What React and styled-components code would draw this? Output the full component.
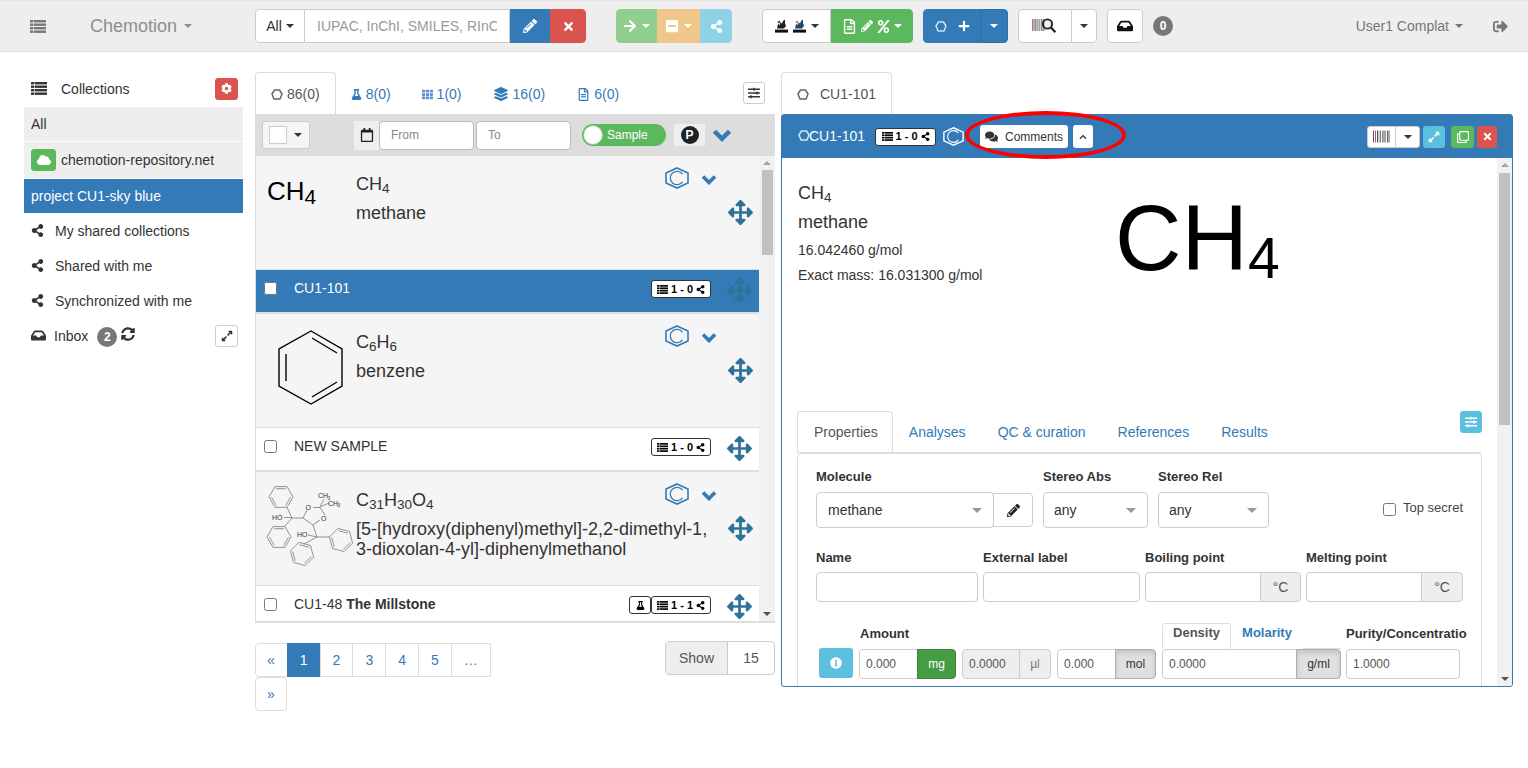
import React from "react";
import styled, { createGlobalStyle } from "styled-components";
import {
  FaPencilAlt, FaTimes, FaArrowRight, FaMinusSquare, FaShareAlt, FaPlus, FaInbox,
  FaSignOutAlt, FaCog, FaCloud, FaSyncAlt, FaExpandAlt, FaFlask, FaTh, FaLayerGroup, FaRegFileAlt,
  FaSlidersH, FaRegCalendar, FaChevronUp, FaArrowsAlt, FaComments, FaRegClone,
  FaInfoCircle, FaPercent,
} from "react-icons/fa";

const Global = createGlobalStyle`
  html, body { margin: 0; padding: 0; background: #fff; overflow: hidden; }
  body { font-family: "Liberation Sans", Arial, sans-serif; font-size: 14px; color: #333; line-height: 20px; }
  * { box-sizing: border-box; }
  sub { font-size: 75%; line-height: 0; vertical-align: baseline; position: relative; bottom: -0.25em; }
`;

const Page = styled.div`width: 1528px; height: 768px; overflow: hidden;`;

/* navbar */
const Nav = styled.nav`
  height: 52px; background: #eee; border-top: 1px solid #e7e7e7; border-bottom: 1px solid #e2e2e2;
  display: flex; align-items: center;
`;
const NavLeft = styled.div`width: 255px; display: flex; align-items: center; color: #777; padding-left: 30px;`;
const Brand = styled.span`margin-left: 44px; font-size: 18px; color: #8f8f8f; display: flex; align-items: center; gap: 7px;`;
const Caret = styled.span`
  display: inline-block; width: 0; height: 0; flex: none;
  border-top: 4px solid ${p => p.$color || "#333"}; border-left: 4px solid transparent; border-right: 4px solid transparent;
`;
const ToolGroup = styled.div`
  display: flex; height: 34px; margin-left: ${p => p.$ml || 0}px; border-radius: 4px; overflow: hidden; flex: none;
`;
const ToolBtn = styled.div`
  width: ${p => p.$w}px; height: 34px; display: flex; align-items: center; justify-content: center; gap: ${p => p.$gap ?? 5}px;
  background: ${p => p.$bg || "#fff"}; color: ${p => p.$color || "#333"};
  border: 1px solid ${p => p.$border || p.$bg || "#ccc"}; margin-left: ${p => p.$join ? "-1px" : "0"};
  &:first-child { border-radius: 4px 0 0 4px; }
  &:last-child { border-radius: 0 4px 4px 0; }
  &:only-child { border-radius: 4px; }
`;
const SearchInput = styled.input`
  width: 205px; height: 34px; border: 1px solid #ccc; border-left: 0; padding: 0 12px; font: 14px "Liberation Sans", sans-serif; color: #555;
  outline: 0; &::placeholder { color: #999; opacity: 1; }
`;
const CountBadge = styled.span`
  display: inline-flex; align-items: center; justify-content: center; width: 20px; height: 20px; border-radius: 50%;
  background: #777; color: #fff; font-size: 12px; font-weight: 700; line-height: 1; margin-left: ${p => p.$ml || 0}px; margin-top: ${p => p.$mt || 0}px; flex: none;
`;
const UserMenu = styled.div`
  margin-left: auto; display: flex; align-items: center; gap: 6px; color: #777; white-space: nowrap;
`;
const LogOut = styled.div`margin: 0 20px 0 30px; color: #777; display: flex;`;

/* layout */
const Main = styled.main`display: flex; padding: 20px 0 0 24px;`;
const Side = styled.aside`width: 219px; flex: none;`;
const Middle = styled.section`width: 520px; margin-left: 12px; flex: none;`;
const Right = styled.section`width: 732px; margin-left: 6px; flex: none;`;

/* sidebar */
const SideHead = styled.div`height: 35px; display: flex; align-items: center; padding: 0 5px 2px 7px;`;
const SideHeadText = styled.span`margin-left: 14px;`;
const MiniBtn = styled.div`
  width: ${p => p.$w || 23}px; height: ${p => p.$h || 22}px; margin-left: ${p => p.$auto ? "auto" : "0"}; border-radius: 3px; flex: none;
  display: flex; align-items: center; justify-content: center;
  background: ${p => p.$bg || "#fff"}; color: ${p => p.$color || "#333"}; border: 1px solid ${p => p.$border || p.$bg || "#ccc"};
`;
const SideRow = styled.div`
  height: ${p => p.$h || 35}px; display: flex; align-items: center; padding: 0 5px 0 7px; margin-bottom: ${p => p.$mb || 0}px;
  background: ${p => p.$bg || "transparent"}; color: ${p => p.$color || "#333"};
`;
const RowLabel = styled.span`margin-left: ${p => p.$ml}px;`;
const Sync = styled.span`display: flex; margin: -4px 0 0 4px;`;

/* tabs */
const TabBar = styled.div`height: 42px; display: flex; align-items: flex-start;`;
const Tab = styled.div`
  height: 42px; padding: 1px 15px 0; display: flex; align-items: center; gap: ${p => p.$gap || 4}px; margin-left: ${p => p.$ml || 0}px;
  color: ${p => p.$active ? "#555" : "#337ab7"};
  border: 1px solid ${p => p.$active ? "#ddd" : "transparent"}; border-bottom: 0; border-radius: 4px 4px 0 0; background: ${p => p.$active ? "#fff" : "transparent"};
`;
const GridTabIcon = styled.span`display: flex; color: #5a94c8;`;
const BarEnd = styled.div`margin: 10px 10px 0 auto;`;

/* list toolbar */
const ListTools = styled.div`height: 42px; background: #ddd; display: flex; align-items: center; padding-left: 7px;`;
const CheckMenu = styled.div`
  width: 48px; height: 28px; border: 1px solid #ccc; border-radius: 3px; background: #f5f5f5; display: flex; align-items: center; gap: 7px; padding-left: 6px;
`;
const CheckFace = styled.span`width: 18px; height: 18px; background: #fff; border: 1px solid #ccc; flex: none;`;
const DateAddon = styled.div`
  width: 25px; height: 29px; margin-left: 44px; background: #eee; display: flex; align-items: center; justify-content: center; color: #222;
`;
const DateInput = styled.input`
  width: ${p => p.$w}px; height: 29px; margin-right: 2px; padding: 0 11px; border: 1px solid #bbb; border-radius: 4px; outline: 0; background: #fff; font: 12px "Liberation Sans", sans-serif;
  &::placeholder { color: #888; opacity: 1; }
`;
const Toggle = styled.div`
  width: 84px; height: 22px; margin-left: 9px; border-radius: 11px; background: #5cb85c; position: relative; display: flex; align-items: center; padding-left: 25px;
  color: #fff; font-size: 12px;
`;
const Knob = styled.span`position: absolute; left: 1px; top: 1px; width: 20px; height: 20px; border-radius: 50%; background: #fff; border: 1px solid #8ccc8c;`;
const PBox = styled.div`width: 31px; height: 22px; margin-left: 8px; background: #eee; display: flex; align-items: center; justify-content: center;`;
const PCircle = styled.span`
  width: 18px; height: 18px; border-radius: 50%; background: #222; color: #fff; font-size: 12px; font-weight: 700; display: flex; align-items: center; justify-content: center;
`;
const ToolChevron = styled.div`margin-left: 7px; color: #337ab7; display: flex;`;

/* list */
const ListWrap = styled.div`display: flex; height: 467px; border-bottom: 2px solid #ddd; border-left: 1px solid #ddd;`;
const ListItems = styled.div`flex: 1; overflow: hidden; min-width: 0;`;
const MolRow = styled.div`height: 114px; background: #f5f5f5; display: flex; border-bottom: 1px solid #ddd;`;
const MolImage = styled.div`width: 100px; flex: none; position: relative;`;
const MolTextCol = styled.div`width: 365px; flex: none;`;
const FormulaLine = styled.div`
  display: flex; align-items: flex-start; justify-content: space-between; height: 47px; padding: 11px 4px 0 0;
`;
const Formula = styled.div`font-size: 18px; line-height: 20px; margin-top: 7px; color: #333;`;
const MolIcons = styled.div`display: flex; align-items: flex-start; gap: 12px;`;
const Down = styled.span`display: flex; color: #337ab7; margin-top: 7px;`;
const MolName = styled.div`font-size: 18px; line-height: 20px; color: #333; margin-top: 0;`;
const MoveCell = styled.div`
  flex: 1; display: flex; justify-content: center; padding-top: ${p => p.$top || 0}px; color: #2f7299;
`;
const SampleRow = styled.div`
  height: 44px; flex: none; display: flex; align-items: flex-start; padding-left: 8px;
  background: ${p => p.$selected ? "#337ab7" : "#fff"}; color: ${p => p.$selected ? "#fff" : "#333"};
  border-bottom: 2px solid #ddd;
`;
const Check = styled.input.attrs({ type: "checkbox" })`margin: 0; width: 13px; height: 13px; flex: none;`;
const RowCheck = styled(Check)`margin-top: 12px;`;
const SampleName = styled.span`margin: 8px 0 0 17px;`;
const SampleTail = styled.div`margin-left: auto; display: flex; align-items: flex-start; padding-top: 10px;`;
const RightTail = styled.div`width: 48px; margin-top: -2px; padding-left: 9px; display: flex; justify-content: center; color: #2f7299;`;
const Tag = styled.span`
  display: inline-flex; align-items: center; justify-content: center; gap: 3px; height: 18px; width: ${p => p.$w || 60}px; flex: none; background: #fff; color: #000;
  border: 1px solid ${p => p.$border || "#333"}; border-radius: 3px; font-size: 11px; font-weight: 700; line-height: 1;
`;

/* scrollbar */
const Bar = styled.div`width: ${p => p.$w || 15}px; flex: none; background: #f1f1f1; display: flex; flex-direction: column; align-items: center;`;
const BarArrow = styled.span`
  width: 0; height: 0; margin-top: ${p => p.$down ? "auto" : "5px"}; margin-bottom: ${p => p.$down ? "5px" : 0};
  border-left: 4px solid transparent; border-right: 4px solid transparent;
  ${p => p.$down ? "border-top: 4px solid #505050;" : "border-bottom: 4px solid #a3a3a3;"}
`;
const BarThumb = styled.span`width: 11px; height: ${p => p.$h}px; margin-top: ${p => p.$top}px; background: #c1c1c1;`;

/* footer */
const ListFoot = styled.div`display: flex; justify-content: space-between; align-items: flex-start; margin-top: 18px;`;
const Pages = styled.div`display: flex; flex-wrap: wrap; width: 240px; padding-top: 2px;`;
const PageItem = styled.div`
  height: 34px; padding: 0 12px; line-height: 32px; border: 1px solid #ddd; margin-left: -1px; color: #337ab7; background: #fff;
  &:first-child { margin-left: 0; border-radius: 4px 0 0 4px; padding: 0 12px 0 11px; }
  ${p => p.$active && "background:#337ab7;border-color:#337ab7;color:#fff;"}
  ${p => p.$wrapped && "border-radius:4px;margin-left:0;padding:0 11px;"}
`;
const ShowGroup = styled.div`display: flex; height: 34px; border: 1px solid #ccc; border-radius: 4px; overflow: hidden; width: 110px;`;
const ShowLabel = styled.div`width: 62px; background: #eee; color: #555; border-right: 1px solid #ccc; text-align: center; line-height: 32px;`;
const ShowValue = styled.div`flex: 1; text-align: center; line-height: 32px; color: #555;`;

/* detail */
const Panel = styled.div`position: relative; height: 573px; border: 1px solid #337ab7; border-radius: 3px;`;
const PanelHead = styled.div`height: 43px; background: #337ab7; color: #fff; display: flex; align-items: center; padding: 0 15px 2px 16px;`;
const HeadIcon = styled.span`display: flex; margin-right: -1px;`;
const HeadTag = styled.div`margin-left: 10px; display: flex; margin-top: 2px;`;
const HeadHex = styled.div`margin-left: 7px; display: flex; margin-top: 2px;`;
const CommentBtn = styled.div`
  width: 88px; height: 23px; margin: 2px 0 0 16px; background: #fff; border-radius: 3px; font-size: 12px; color: #333; display: flex; align-items: center; justify-content: center; gap: 7px;
`;
const UpBtn = styled.div`
  width: 20px; height: 23px; margin: 2px 0 0 5px; background: #fff; border-radius: 3px; color: #333; display: flex; align-items: center; justify-content: center;
`;
const HeadTools = styled.div`margin: 2px 0 0 auto; display: flex; align-items: center;`;
const BarcodeGroup = styled.div`display: flex; width: 53px; height: 22px; background: #fff; border-radius: 3px; border: 1px solid #ccc; margin-right: 3px;`;
const BarcodeFace = styled.div`width: 28px; display: flex; align-items: center; justify-content: center; border-right: 1px solid #ccc;`;
const BarcodeCaret = styled.div`flex: 1; display: flex; align-items: center; justify-content: center;`;
const HeadBtn = styled.div`
  width: ${p => p.$w}px; height: 22px; margin-left: ${p => p.$ml || 0}px; border-radius: 3px; background: ${p => p.$bg}; color: #fff; display: flex; align-items: center; justify-content: center;
`;
const Ellipse = styled.div`
  position: absolute; left: 183px; top: -4px; width: 161px; height: 48px; border: 4px solid #f00; border-radius: 50%; pointer-events: none; z-index: 2;
`;
const PanelBody = styled.div`display: flex; height: 528px; overflow: hidden; border-radius: 0 0 3px 3px;`;
const Scroll = styled.div`flex: 1; min-width: 0; overflow: hidden; padding: 0 15px;`;
const Summary = styled.div`height: 253px; display: flex;`;
const SummaryText = styled.div`width: 318px; padding: 25px 0 0 1px; flex: none;`;
const SumFormula = styled.div`font-size: 18px; line-height: 20px; color: #333;`;
const SumName = styled.div`font-size: 18px; line-height: 20px; margin-top: 9px;`;
const SumLine = styled.div`line-height: 20px; margin-top: ${p => p.$mt}px;`;
const BigFormula = styled.div`font-size: 92px; line-height: 92px; margin-top: 34px; color: #000; white-space: nowrap;`;
const BigSub = styled.span`font-size: 57px; position: relative; top: 8px; line-height: 0;`;
const TabRow = styled.div`height: 42px; display: flex; border-bottom: 1px solid #ddd; align-items: flex-start;`;
const FormTab = styled.div`
  height: 41px; padding: 0 15px; line-height: 40px; border: 1px solid ${p => p.$active ? "#ddd" : "transparent"}; border-bottom: 0; border-radius: 4px 4px 0 0;
  color: ${p => p.$active ? "#555" : "#337ab7"}; background: #fff;
  ${p => p.$active && "padding: 0 14px 0 16px;"}
`;
const FormPanel = styled.div`border: 1px solid #ddd; border-radius: 4px 4px 0 0; padding: 15px 18px 40px;`;
const FormRow = styled.div`display: flex; align-items: ${p => p.$align || "flex-start"}; gap: ${p => p.$gap ?? 5}px; margin-top: ${p => p.$mt || 0}px;`;
const Field = styled.div`width: ${p => p.$w}px; flex: none; margin-left: ${p => p.$ml || 0}px; ${p => p.$clip && "overflow:hidden;white-space:nowrap;"}`;
const Label = styled.div`font-size: 13px; font-weight: 700; line-height: 16px; margin-bottom: ${p => p.$mb ?? 6}px; margin-left: ${p => p.$ml || 0}px; color: #333;`;
const SelectWrap = styled.div`display: flex; align-items: center;`;
const SelectBox = styled.div`
  flex: 1; height: 36px; border: 1px solid #ccc; border-radius: 4px; display: flex; align-items: center; padding: 0 10px 0 ${p => p.$pl || 11}px; justify-content: space-between; color: #333; background: #fff;
`;
const SelectArrow = styled.span`width: 0; height: 0; border-top: 5px solid #999; border-left: 5px solid transparent; border-right: 5px solid transparent; flex: none; margin-right: 1px;`;
const PenBtn = styled.div`
  width: 40px; height: 34px; margin-left: -1px; border: 1px solid #ccc; border-radius: 0 4px 4px 0; display: flex; align-items: center; justify-content: center; color: #222;
`;
const Secret = styled.label`margin-left: auto; display: flex; align-items: center; gap: 7px; font-size: 13px; margin-top: 34px; color: #444; line-height: 16px;`;
const SecretText = styled.span`margin-top: -4px;`;
const Box = styled.input`
  display: block; width: ${p => p.$w ? p.$w + "px" : "100%"}; min-width: 0; flex: ${p => p.$flex ? 1 : "none"}; height: 30px; border: 1px solid #ccc; border-radius: ${p => p.$addon ? "4px 0 0 4px" : "4px"}; padding: 0 6px; outline: 0;
  font: 12px "Liberation Sans", sans-serif; color: #555; background: ${p => p.$disabled ? "#eee" : "#fff"};
`;
const InGroup = styled.div`display: flex;`;
const Addon = styled.div`
  width: ${p => p.$w}px; height: 30px; flex: none; margin-left: -1px; border: 1px solid ${p => p.$border || "#ccc"}; border-radius: 0 4px 4px 0; display: flex; align-items: center; justify-content: center;
  background: ${p => p.$bg || "#eee"}; color: ${p => p.$color || "#555"}; font-size: ${p => p.$fs || 12}px; ${p => p.$pressed && "box-shadow: inset 0 3px 5px rgba(0,0,0,.125);"}
`;
const InfoBtn = styled.div`
  width: 34px; height: 30px; margin: 0 0 1px 3px; border-radius: 3px; background: #5bc0de; color: #fff; display: flex; align-items: center; justify-content: center; flex: none;
`;
const DensityTabs = styled.div`display: flex; height: 26px; border-bottom: 1px solid #ddd; align-items: flex-start;`;
const DensityTab = styled.div`
  width: ${p => p.$w}px; height: 26px; font-size: 13px; font-weight: 700; line-height: 18px; text-align: center; border: 1px solid ${p => p.$active ? "#ddd" : "transparent"}; border-bottom: 0; border-radius: 3px 3px 0 0;
  color: ${p => p.$active ? "#555" : "#337ab7"}; background: #fff;
`;

/* icon drawings */
const ListIcon = ({ w = 16, h = 13 }) => (
  <svg width={w} height={h} viewBox="0 0 16 13" fill="currentColor">
    {[0, 3.5, 7, 10.5].map(y => (
      <g key={y}>
        <rect x="0" y={y} width="3" height="2.4" />
        <rect x="3.6" y={y} width="12.4" height="2.4" />
      </g>
    ))}
  </svg>
);
const Chevron = ({ w = 16, h = 11, sw = 3.6 }) => (
  <svg width={w} height={h} viewBox="0 0 16 11" fill="none" stroke="currentColor" strokeWidth={sw}>
    <path d="M2 2.5L8 8.5L14 2.5" />
  </svg>
);
const Hex = ({ color = "#337ab7", w = 24, h = 22 }) => (
  <svg width={w} height={h} viewBox="0 0 24 22" fill="none" stroke={color} strokeWidth="1.6">
    <polygon points="12,1 23,6 23,16 12,21 1,16 1,6" />
    <path d="M17.5 7.2A6.7 6.7 0 1 0 17.5 14.8" strokeWidth="1.3" />
  </svg>
);
const SampleIcon = ({ color = "#666" }) => (
  <svg width="12" height="11" viewBox="0 0 12 11" fill="none" stroke={color} strokeWidth="1.5" strokeLinejoin="round">
    <polygon points="3.5,1 8.5,1 11,5 9,10 3,10 1,5" />
  </svg>
);
const Move = () => <FaArrowsAlt size={25} />;
const Stripes = ({ w, h }) => {
  const xs = [0, 2, 4, 5.5, 7, 9, 10.5, 12, 14, 15.5];
  const cols = ["#555", "#b58", "#555", "#8a8", "#777", "#88b", "#555", "#b88", "#666", "#555"];
  return (
    <svg width={w} height={h} viewBox="0 0 17 12">
      {xs.map((x, i) => <rect key={x} x={x} y="0" width="1" height="12" fill={cols[i]} />)}
    </svg>
  );
};
const ReactionGlyph = ({ tint }) => (
  <svg width="13" height="14" viewBox="0 0 13 14">
    <rect x="0" y="10.6" width="13" height="3" fill="#111" />
    <path d="M2 9.6L3 5L5 6V3.5L7 4.5L8 2L10 0.5V4L11 7L9 9.6Z" fill={tint ? "#24476e" : "#222"} />
    <circle cx="4" cy="3" r="1.3" fill={tint ? "#c98a5a" : "#6b4a2a"} />
  </svg>
);
const Scan = () => (
  <svg width="26" height="16" viewBox="0 0 26 16">
    <rect x="0" y="1" width="13" height="12" fill="#d8d8d8" />
    {[0, 2.5, 4.5, 6.5, 9, 11].map((x, i) => <rect key={x} x={x} y="1" width="1.4" height="12" fill={["#a77", "#888", "#b9a", "#9a9", "#88a", "#a96"][i]} />)}
    <circle cx="15.5" cy="6" r="4.6" fill="#9cb" fillOpacity=".25" stroke="#222" strokeWidth="1.9" />
    <path d="M19 9.5l4.3 4.8" stroke="#222" strokeWidth="2.2" />
  </svg>
);

const Ring = ({ cx, cy, r = 12, rot = 0 }) => {
  const pts = [0, 1, 2, 3, 4, 5].map(i => {
    const a = (rot + 60 * i) * Math.PI / 180;
    return [cx + r * Math.cos(a), cy + r * Math.sin(a)];
  });
  const inner = [0, 2, 4].map(i => {
    const [a, b] = [pts[i], pts[(i + 1) % 6]];
    const s = 0.8;
    const f = ([x, y]) => [cx + (x - cx) * s, cy + (y - cy) * s];
    const [p, q] = [f(a), f(b)];
    return <line key={i} x1={p[0]} y1={p[1]} x2={q[0]} y2={q[1]} />;
  });
  return <g><polygon points={pts.map(p => p.join(",")).join(" ")} />{inner}</g>;
};
const ChemSvg = styled.svg`position: absolute; left: ${p => p.$x}px; top: ${p => p.$y}px;`;
const ComplexMol = () => (
  <ChemSvg $x={4} $y={3} width="100" height="110" viewBox="0 0 100 110" fill="none" stroke="#888" strokeWidth=".9">
    <Ring cx={21} cy={22} rot={0} />
    <Ring cx={19} cy={62} rot={0} />
    <Ring cx={42} cy={79} rot={15} />
    <Ring cx={81} cy={65} rot={15} />
    <path d="M27 32.5L32 43L25 51M32 43L43 43L47 35M43 43L53 50L60 45M53 50L57 62L48 60M57 62L44 69M57 62L70 62M53 32.5H60L65 40M60 32L64 24M60 32L69 28M24 42.5H32" />
    <g fill="#333" stroke="none" fontFamily="Liberation Sans, sans-serif" fontSize="7">
      <text x="12" y="45">HO</text>
      <text x="37" y="62">HO</text>
      <text x="45.5" y="35">O</text>
      <text x="61" y="46">O</text>
      <text x="58" y="23">CH</text><text x="67.5" y="24.5" fontSize="4.8">3</text>
      <text x="68" y="30.5">CH</text><text x="77.5" y="32" fontSize="4.8">3</text>
    </g>
  </ChemSvg>
);
const Benzene = () => (
  <ChemSvg $x={0} $y={0} width="100" height="113" viewBox="0 0 100 113" fill="none" stroke="#000" strokeWidth="1.4">
    <polygon points="55,17 86,35 86,72 55,90 23,72 23,35" />
    <path d="M30 40V67M56 24L81 39M56 83L81 68" />
  </ChemSvg>
);
const SimpleMol = styled.div`position: absolute; left: 11px; top: 17px; font-size: 26px; line-height: 36px; color: #000;`;
const SimpleSub = styled.span`font-size: 21px; position: relative; top: 4px; line-height: 0;`;

const Stock = ({ text, w }) => (
  <Tag $w={w}><ListIcon w={11} h={9} />{text}<FaShareAlt size={9} /></Tag>
);
const MolEntry = ({ image, formula, name }) => (
  <MolRow>
    <MolImage>{image}</MolImage>
    <MolTextCol>
      <FormulaLine>
        <Formula>{formula}</Formula>
        <MolIcons><Hex /><Down><Chevron /></Down></MolIcons>
      </FormulaLine>
      <MolName>{name}</MolName>
    </MolTextCol>
    <MoveCell $top={44}><Move /></MoveCell>
  </MolRow>
);

const shared = ["My shared collections", "Shared with me", "Synchronized with me"];

export default function App() {
  return (
    <Page>
      <Global />
      <Nav>
        <NavLeft>
          <ListIcon />
          <Brand>Chemotion <Caret $color="#8f8f8f" /></Brand>
        </NavLeft>
        <ToolGroup>
          <ToolBtn $w={50} $gap={4}>All <Caret /></ToolBtn>
          <SearchInput placeholder="IUPAC, InChI, SMILES, RInChI" />
          <ToolBtn $w={40} $bg="#337ab7" $color="#fff"><FaPencilAlt size={14} /></ToolBtn>
          <ToolBtn $w={36} $bg="#d9534f" $color="#fff"><FaTimes size={13} /></ToolBtn>
        </ToolGroup>
        <ToolGroup $ml={30}>
          <ToolBtn $w={41} $bg="#91cf91" $color="#fff"><FaArrowRight size={14} /><Caret $color="#fff" /></ToolBtn>
          <ToolBtn $w={43} $bg="#f0c68a" $color="#fff"><FaMinusSquare size={14} /><Caret $color="#fff" /></ToolBtn>
          <ToolBtn $w={32} $bg="#8ed2e6" $color="#fff"><FaShareAlt size={13} /></ToolBtn>
        </ToolGroup>
        <ToolGroup $ml={30}>
          <ToolBtn $w={69} $gap={5}><ReactionGlyph /><ReactionGlyph tint /><Caret /></ToolBtn>
          <ToolBtn $w={82} $bg="#5cb85c" $color="#fff" $gap={4}><FaRegFileAlt size={15} /><FaPencilAlt size={12} /><FaPercent size={13} /><Caret $color="#fff" /></ToolBtn>
        </ToolGroup>
        <ToolGroup $ml={10}>
          <ToolBtn $w={58} $bg="#337ab7" $color="#fff" $gap={11}><SampleIcon color="#cfe3f5" /><FaPlus size={12} /></ToolBtn>
          <ToolBtn $w={28} $bg="#337ab7" $border="#2e6da4" $join><Caret $color="#fff" /></ToolBtn>
        </ToolGroup>
        <ToolGroup $ml={10}>
          <ToolBtn $w={54}><Scan /></ToolBtn>
          <ToolBtn $w={26} $join><Caret /></ToolBtn>
        </ToolGroup>
        <ToolGroup $ml={10}>
          <ToolBtn $w={36}><FaInbox size={16} color="#111" /></ToolBtn>
        </ToolGroup>
        <CountBadge $ml={10}>0</CountBadge>
        <UserMenu>User1 Complat <Caret $color="#777" /></UserMenu>
        <LogOut><FaSignOutAlt size={15} /></LogOut>
      </Nav>

      <Main>
        <Side>
          <SideHead>
            <ListIcon />
            <SideHeadText>Collections</SideHeadText>
            <MiniBtn $auto $bg="#d9534f" $color="#fff"><FaCog size={11} /></MiniBtn>
          </SideHead>
          <SideRow $bg="#eee" $h={34} $mb={1}>All</SideRow>
          <SideRow $bg="#eee" $h={36} $mb={1}>
            <MiniBtn $w={25} $bg="#5cb85c" $color="#fff"><FaCloud size={14} /></MiniBtn>
            <RowLabel $ml={5}>chemotion-repository.net</RowLabel>
          </SideRow>
          <SideRow $bg="#337ab7" $color="#fff" $h={34}>project CU1-sky blue</SideRow>
          {shared.map(s => (
            <SideRow key={s}><FaShareAlt size={13} /><RowLabel $ml={11}>{s}</RowLabel></SideRow>
          ))}
          <SideRow>
            <FaInbox size={15} />
            <RowLabel $ml={8}>Inbox</RowLabel>
            <CountBadge $ml={9} $mt={3}>2</CountBadge>
            <Sync><FaSyncAlt size={14} /></Sync>
            <MiniBtn $auto><FaExpandAlt size={12} /></MiniBtn>
          </SideRow>
        </Side>

        <Middle>
          <TabBar>
            <Tab $active><SampleIcon />86(0)</Tab>
            <Tab $ml={-1}><FaFlask size={11} />8(0)</Tab>
            <Tab $ml={-1}><GridTabIcon><FaTh size={11} /></GridTabIcon>1(0)</Tab>
            <Tab $gap={5}><FaLayerGroup size={14} />16(0)</Tab>
            <Tab><FaRegFileAlt size={13} />6(0)</Tab>
            <BarEnd><MiniBtn $w={22}><FaSlidersH size={12} /></MiniBtn></BarEnd>
          </TabBar>
          <ListTools>
            <CheckMenu><CheckFace /><Caret /></CheckMenu>
            <DateAddon><FaRegCalendar size={14} /></DateAddon>
            <DateInput $w={95} placeholder="From" />
            <DateInput $w={95} placeholder="To" />
            <Toggle><Knob />Sample</Toggle>
            <PBox><PCircle>P</PCircle></PBox>
            <ToolChevron><Chevron w={20} h={14} /></ToolChevron>
          </ListTools>
          <ListWrap>
            <ListItems>
              <MolEntry
                image={<SimpleMol>CH<SimpleSub>4</SimpleSub></SimpleMol>}
                formula={<>CH<sub>4</sub></>}
                name="methane"
              />
              <SampleRow $selected>
                <RowCheck />
                <SampleName>CU1-101</SampleName>
                <SampleTail><Stock text="1 - 0" /><RightTail><Move /></RightTail></SampleTail>
              </SampleRow>
              <MolEntry image={<Benzene />} formula={<>C<sub>6</sub>H<sub>6</sub></>} name="benzene" />
              <SampleRow>
                <RowCheck />
                <SampleName>NEW SAMPLE</SampleName>
                <SampleTail><Stock text="1 - 0" /><RightTail><Move /></RightTail></SampleTail>
              </SampleRow>
              <MolEntry
                image={<ComplexMol />}
                formula={<>C<sub>31</sub>H<sub>30</sub>O<sub>4</sub></>}
                name={<>[5-[hydroxy(diphenyl)methyl]-2,2-dimethyl-1,<br />3-dioxolan-4-yl]-diphenylmethanol</>}
              />
              <SampleRow>
                <RowCheck />
                <SampleName>CU1-48 <b>The Millstone</b></SampleName>
                <SampleTail><Tag $w={22}><FaFlask size={9} /></Tag><Stock text="1 - 1" /><RightTail><Move /></RightTail></SampleTail>
              </SampleRow>
            </ListItems>
            <Bar $w={16}>
              <BarArrow />
              <BarThumb $top={5} $h={85} />
              <BarArrow $down />
            </Bar>
          </ListWrap>
          <ListFoot>
            <Pages>
              <PageItem>«</PageItem>
              <PageItem $active>1</PageItem>
              <PageItem>2</PageItem>
              <PageItem>3</PageItem>
              <PageItem>4</PageItem>
              <PageItem>5</PageItem>
              <PageItem>…</PageItem>
              <PageItem $wrapped>»</PageItem>
            </Pages>
            <ShowGroup><ShowLabel>Show</ShowLabel><ShowValue>15</ShowValue></ShowGroup>
          </ListFoot>
        </Middle>

        <Right>
          <TabBar>
            <Tab $active $gap={11}><SampleIcon />CU1-101</Tab>
          </TabBar>
          <Panel>
            <PanelHead>
              <HeadIcon><SampleIcon color="#d5e6f5" /></HeadIcon>CU1-101
              <HeadTag><Stock text="1 - 0" w={61} /></HeadTag>
              <HeadHex><Hex color="#fff" w={21} h={21} /></HeadHex>
              <CommentBtn><FaComments size={13} />Comments</CommentBtn>
              <UpBtn><FaChevronUp size={8} /></UpBtn>
              <HeadTools>
                <BarcodeGroup>
                  <BarcodeFace><Stripes w={17} h={13} /></BarcodeFace>
                  <BarcodeCaret><Caret /></BarcodeCaret>
                </BarcodeGroup>
                <HeadBtn $w={22} $bg="#5bc0de"><FaExpandAlt size={12} /></HeadBtn>
                <HeadBtn $w={23} $ml={6} $bg="#5cb85c"><FaRegClone size={12} /></HeadBtn>
                <HeadBtn $w={20} $ml={3} $bg="#d9534f"><FaTimes size={11} /></HeadBtn>
              </HeadTools>
              <Ellipse />
            </PanelHead>
            <PanelBody>
              <Scroll>
                <Summary>
                  <SummaryText>
                    <SumFormula>CH<sub>4</sub></SumFormula>
                    <SumName>methane</SumName>
                    <SumLine $mt={8}>16.042460 g/mol</SumLine>
                    <SumLine $mt={5}>Exact mass: 16.031300 g/mol</SumLine>
                  </SummaryText>
                  <BigFormula>CH<BigSub>4</BigSub></BigFormula>
                </Summary>
                <TabRow>
                  <FormTab $active>Properties</FormTab>
                  <FormTab>Analyses</FormTab>
                  <FormTab>QC &amp; curation</FormTab>
                  <FormTab>References</FormTab>
                  <FormTab>Results</FormTab>
                  <MiniBtn $auto $w={22} $bg="#5bc0de" $color="#fff"><FaSlidersH size={12} /></MiniBtn>
                </TabRow>
                <FormPanel>
                  <FormRow $gap={10}>
                    <Field $w={217}>
                      <Label $mb={7}>Molecule</Label>
                      <SelectWrap>
                        <SelectBox>methane <SelectArrow /></SelectBox>
                        <PenBtn><FaPencilAlt size={13} /></PenBtn>
                      </SelectWrap>
                    </Field>
                    <Field $w={105}>
                      <Label $mb={7}>Stereo Abs</Label>
                      <SelectBox $pl={10}>any <SelectArrow /></SelectBox>
                    </Field>
                    <Field $w={111}>
                      <Label $mb={7}>Stereo Rel</Label>
                      <SelectBox $pl={10}>any <SelectArrow /></SelectBox>
                    </Field>
                    <Secret><Check /><SecretText>Top secret</SecretText></Secret>
                  </FormRow>
                  <FormRow $mt={22}>
                    <Field $w={162}><Label>Name</Label><Box /></Field>
                    <Field $w={157}><Label>External label</Label><Box /></Field>
                    <Field $w={156}>
                      <Label>Boiling point</Label>
                      <InGroup><Box $flex $addon /><Addon $w={41} $fs={14}>°C</Addon></InGroup>
                    </Field>
                    <Field $w={157}>
                      <Label>Melting point</Label>
                      <InGroup><Box $flex $addon /><Addon $w={42} $fs={14}>°C</Addon></InGroup>
                    </Field>
                  </FormRow>
                  <FormRow $mt={21} $align="flex-end" $gap={6}>
                    <InfoBtn><FaInfoCircle size={12} /></InfoBtn>
                    <Field $w={97}>
                      <Label $mb={7} $ml={1}>Amount</Label>
                      <InGroup><Box $flex $addon defaultValue="0.000" /><Addon $w={39} $bg="#449d44" $border="#398439" $color="#fff">mg</Addon></InGroup>
                    </Field>
                    <Field $w={89}>
                      <InGroup><Box $flex $addon $disabled defaultValue="0.0000" /><Addon $w={32} $color="#777">µl</Addon></InGroup>
                    </Field>
                    <Field $w={99}>
                      <InGroup><Box $flex $addon defaultValue="0.000" /><Addon $w={41} $bg="#e0e0e0" $border="#adadad" $color="#333" $pressed>mol</Addon></InGroup>
                    </Field>
                    <Field $w={179}>
                      <DensityTabs>
                        <DensityTab $active $w={69}>Density</DensityTab>
                        <DensityTab $w={72}>Molarity</DensityTab>
                      </DensityTabs>
                      <InGroup><Box $flex $addon defaultValue="0.0000" /><Addon $w={45} $bg="#e0e0e0" $border="#adadad" $color="#333" $pressed>g/ml</Addon></InGroup>
                    </Field>
                    <Field $w={121} $ml={-1} $clip>
                      <Label $mb={7}>Purity/Concentration</Label>
                      <Box $w={114} defaultValue="1.0000" />
                    </Field>
                  </FormRow>
                </FormPanel>
              </Scroll>
              <Bar>
                <BarArrow />
                <BarThumb $top={6} $h={252} />
                <BarArrow $down />
              </Bar>
            </PanelBody>
          </Panel>
        </Right>
      </Main>
    </Page>
  );
}
